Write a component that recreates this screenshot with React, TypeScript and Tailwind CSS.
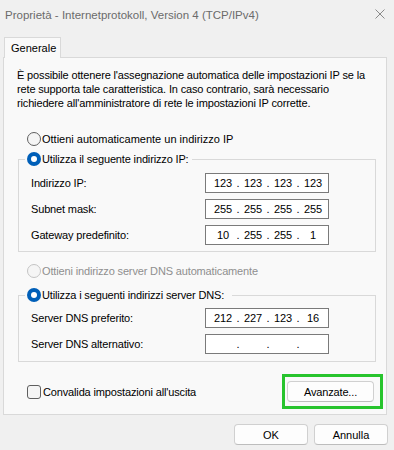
import React from 'react';

const font = { fontFamily: '"Liberation Sans", Arial, sans-serif' };

function Radio({ checked = false, disabled = false }: { checked?: boolean; disabled?: boolean }) {
  if (checked) {
    return (
      <span className="flex h-[14px] w-[14px] shrink-0 items-center justify-center rounded-full bg-[#005fb8]">
        <span className="h-[6px] w-[6px] rounded-full bg-white" />
      </span>
    );
  }
  return (
    <span
      className={
        'h-[14px] w-[14px] shrink-0 rounded-full border bg-[#f5f5f5] ' +
        (disabled ? 'border-[#c4c4c4]' : 'border-[#5f5f5f]')
      }
    />
  );
}

function IpBox({ parts }: { parts: string[] }) {
  return (
    <div className="flex h-[20px] w-[124px] items-center border border-[#7a7a7a] bg-white pl-[5px] pr-[3px] text-black">
      {parts.map((p, i) => (
        <React.Fragment key={i}>
          {i > 0 && <span className="w-[6px] text-center">.</span>}
          <span className="w-[24px] text-center">{p}</span>
        </React.Fragment>
      ))}
    </div>
  );
}

function Row({ label, parts }: { label: string; parts: string[] }) {
  return (
    <div className="flex h-[20px] items-center pl-[6px]">
      <span className="w-[174px]">{label}</span>
      <IpBox parts={parts} />
    </div>
  );
}

function Button({ children, w }: { children: React.ReactNode; w: string }) {
  return (
    <button
      className={
        'flex h-[21px] items-center justify-center rounded-[4px] border border-[#d0d0d0] border-b-[#bdbdbd] bg-[#fdfdfd] text-black ' +
        w
      }
    >
      {children}
    </button>
  );
}

export default function App() {
  return (
    <div className="h-[450px] w-[394px] overflow-hidden bg-[#f0f0f0] text-[11px] leading-[14px] text-black" style={font}>
      {/* title bar */}
      <div className="flex h-[30px] items-center justify-between pl-[5px] pr-[9px]">
        <span className="text-[11.5px] text-[#6b6b6b]">Proprietà - Internetprotokoll, Version 4 (TCP/IPv4)</span>
        <svg width="10" height="10" viewBox="0 0 10 10" className="mb-[2px]">
          <path d="M0.5 0.5 L9.5 9.5 M9.5 0.5 L0.5 9.5" stroke="#8a8a8a" strokeWidth="1" />
        </svg>
      </div>

      {/* tab */}
      <div className="mt-[7px] flex pl-[4px]">
        <div className="relative z-10 -mb-px flex h-[21px] w-[57px] items-center border border-b-0 border-[#d9d9d9] bg-[#f9f9f9] pl-[6px]">
          Generale
        </div>
      </div>

      {/* panel */}
      <div className="ml-[3px] flex h-[358px] w-[384px] flex-col border border-[#d9d9d9] bg-[#f9f9f9] tracking-[-0.15px]">
        <p className="mt-[10px] whitespace-nowrap pl-[13px]">
          È possibile ottenere l'assegnazione automatica delle impostazioni IP se la
          <br />
          rete supporta tale caratteristica. In caso contrario, sarà necessario
          <br />
          richiedere all'amministratore di rete le impostazioni IP corrette.
        </p>

        <div className="mt-[21px] flex h-[16px] items-center gap-[1px] pl-[23px] tracking-normal">
          <Radio />
          <span>Ottieni automaticamente un indirizzo IP</span>
        </div>

        <fieldset className="ml-[14px] mr-[10px] mt-[4px] flex flex-col gap-[6px] border border-[#d9d9d9] px-[6px] pb-[6px] pt-[6px]">
          <legend className="flex h-[16px] items-center gap-[1px] pl-[2px] pr-[3px]">
            <Radio checked />
            <span>Utilizza il seguente indirizzo IP:</span>
          </legend>
          <Row label="Indirizzo IP:" parts={['123', '123', '123', '123']} />
          <Row label="Subnet mask:" parts={['255', '255', '255', '255']} />
          <Row label="Gateway predefinito:" parts={['10', '255', '255', '1']} />
        </fieldset>

        <div className="mt-[11px] flex h-[16px] items-center gap-[1px] pl-[23px] text-[#8f8f8f]">
          <Radio disabled />
          <span>Ottieni indirizzo server DNS automaticamente</span>
        </div>

        <fieldset className="ml-[14px] mr-[10px] mt-[8px] flex flex-col gap-[6px] border border-[#d9d9d9] px-[6px] pb-[7px] pt-[5px]">
          <legend className="flex h-[16px] items-center gap-[1px] pl-[2px] pr-[8px]">
            <Radio checked />
            <span>Utilizza i seguenti indirizzi server DNS:</span>
          </legend>
          <Row label="Server DNS preferito:" parts={['212', '227', '123', '16']} />
          <Row label="Server DNS alternativo:" parts={['', '', '', '']} />
        </fieldset>

        <div className="mt-[12px] flex items-center justify-between pl-[23px] pr-[3px]">
          <div className="flex items-center gap-[2px]">
            <span className="h-[14px] w-[14px] rounded-[3px] border border-[#5f5f5f] bg-[#f5f5f5]" />
            <span>Convalida impostazioni all'uscita</span>
          </div>
          <div className="border-[3px] border-[#27c42d] py-[4px] pl-[2px] pr-[6px]">
            <Button w="w-[87px]">Avanzate...</Button>
          </div>
        </div>
      </div>

      {/* dialog buttons */}
      <div className="mt-[9px] flex justify-end gap-[6px] pr-[6px]">
        <Button w="w-[74px]">OK</Button>
        <Button w="w-[74px]">Annulla</Button>
      </div>
    </div>
  );
}
